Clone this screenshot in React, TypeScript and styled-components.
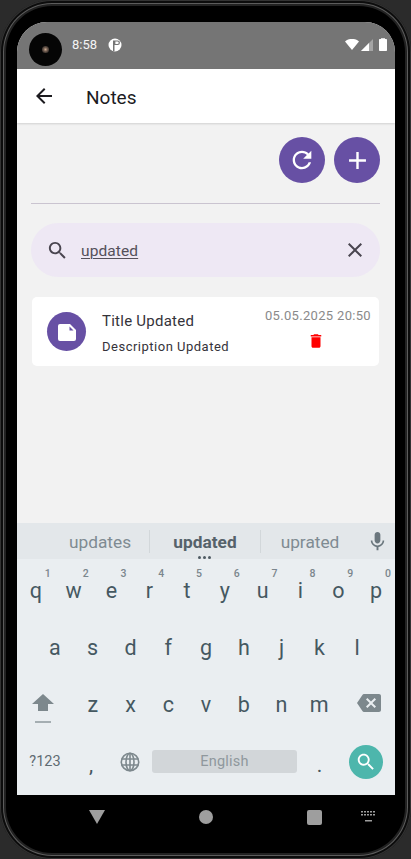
import React from "react";
import styled, { createGlobalStyle } from "styled-components";

const Global = createGlobalStyle`
  html, body { margin: 0; padding: 0; background: #2b2b2b; }
  body { width: 411px; height: 859px; overflow: hidden; font-family: Roboto, "Liberation Sans", sans-serif; }
  * { box-sizing: border-box; }
`;

const Device = styled.div`
  position: relative;
  width: 411px;
  height: 859px;
  background: #000;
  border-radius: 52px;
  padding: 22px 16px 0 17px;
  display: flex;
  flex-direction: column;
  box-shadow: inset 0 0 0 1px #333, inset 0 0 0 3px #0c0c0c, inset 0 0 0 4px #5c5c5c, inset 0 0 0 6px #222;
`;
const Screen = styled.div`
  width: 378px;
  height: 773px;
  display: flex;
  flex-direction: column;
  border-radius: 30px 30px 0 0;
  overflow: hidden;
  background: #f2f2f2;
`;
const StatusBar = styled.div`
  height: 47px;
  background: #757575;
  display: flex;
  align-items: center;
  padding: 0 8px 2px 55px;
  color: #fff;
  gap: 11px;
`;
const Time = styled.span`
  font-size: 13px;
  font-weight: 400;
  color: #f4f4f4;
`;
const StatusRight = styled.div`
  margin-left: auto;
  display: flex;
  align-items: center;
  gap: 2px;
`;
const Camera = styled.div`
  position: absolute;
  left: 29px;
  top: 33px;
  width: 33px;
  height: 33px;
  border-radius: 50%;
  background: #050505;
  display: flex;
  align-items: center;
  justify-content: center;
`;
const Lens = styled.div`
  width: 7px;
  height: 7px;
  border-radius: 50%;
  background: radial-gradient(circle, #c8a890 0, #5a4a40 50%, #222 100%);
`;
const AppBar = styled.div`
  height: 54px;
  background: #fff;
  display: flex;
  align-items: center;
  padding: 0 0 0 15px;
  box-shadow: 0 1px 2px rgba(0,0,0,.14);
  position: relative;
  gap: 30px;
`;
const Title = styled.h1`
  margin: 2px 0 0;
  font-size: 19px;
  font-weight: 400;
  color: #1c1b1f;
`;
const Body = styled.div`
  flex: 1;
  display: flex;
  flex-direction: column;
  padding: 14px 15px 0 14px;
`;
const Actions = styled.div`
  display: flex;
  justify-content: flex-end;
  gap: 9px;
`;
const RoundButton = styled.button`
  width: 46px;
  height: 46px;
  border: 0;
  padding: 0;
  border-radius: 50%;
  background: #6750a4;
  display: flex;
  align-items: center;
  justify-content: center;
`;
const Divider = styled.div`
  height: 1px;
  background: #cac4d0;
  margin-top: 20px;
`;
const SearchBar = styled.div`
  margin-top: 19px;
  height: 54px;
  border-radius: 27px;
  background: #eee8f4;
  display: flex;
  align-items: center;
  padding: 0 13px 0 15px;
`;
const SearchText = styled.span`
  margin-left: 12px;
  padding-top: 1px;
  flex: 1;
  font-size: 15.5px;
  letter-spacing: .1px;
  color: #55515b;
  text-decoration: underline;
  text-underline-offset: 2px;
  text-decoration-thickness: 1px;
`;
const Card = styled.div`
  margin: 20px 1px 0;
  height: 69px;
  background: #fff;
  border-radius: 5px;
  display: flex;
  align-items: center;
  padding: 0 8px 0 15px;
`;
const Avatar = styled.div`
  width: 39px;
  height: 39px;
  border-radius: 50%;
  background: #6750a4;
  display: flex;
  align-items: center;
  justify-content: center;
`;
const CardMain = styled.div`
  flex: 1;
  margin-left: 16px;
  display: flex;
  flex-direction: column;
  gap: 9px;
  padding-top: 3px;
`;
const CardTitle = styled.div`
  font-size: 15px;
  letter-spacing: .25px;
  color: #35333a;
`;
const CardDesc = styled.div`
  font-size: 13px;
  letter-spacing: .5px;
  color: #35333a;
`;
const CardSide = styled.div`
  display: flex;
  flex-direction: column;
  align-items: center;
  gap: 9px;
  padding-bottom: 5px;
`;
const TrashWrap = styled.div`
  display: flex;
  padding-right: 4px;
`;
const DateText = styled.div`
  font-size: 13px;
  letter-spacing: .32px;
  color: #8a8a8a;
`;
const Keyboard = styled.div`
  height: 272px;
  background: #eaeef1;
  display: flex;
  flex-direction: column;
`;
const Strip = styled.div`
  height: 36px;
  background: #e3e7ea;
  display: grid;
  grid-template-columns: 133px 111px 98px 1fr;
  align-items: center;
  position: relative;
`;
const Suggestion = styled.div<{ $bold?: boolean; $line?: boolean; $lead?: number }>`
  text-align: center;
  font-size: 17.3px;
  font-weight: ${(p) => (p.$bold ? 700 : 400)};
  color: ${(p) => (p.$bold ? "#56626a" : "#7f8b92")};
  height: 23px;
  line-height: 25px;
  border-right: ${(p) => (p.$line ? "1px solid #d2d7da" : "0")};
  padding-left: ${(p) => p.$lead ?? 0}px;
`;
const Dots = styled.div`
  position: absolute;
  left: 181px;
  bottom: 0;
  display: flex;
  gap: 2px;
`;
const Dot = styled.i`
  width: 3px;
  height: 3px;
  border-radius: 50%;
  background: #4f5b63;
`;
const MicCell = styled.div`
  display: flex;
  justify-content: center;
`;
const Keys = styled.div`
  flex: 1;
  display: flex;
  flex-direction: column;
  padding: 3px 0 5px;
`;
const KeyRow = styled.div<{ $inset?: number }>`
  height: 57px;
  display: flex;
  align-items: center;
  padding: 0 ${(p) => p.$inset ?? 0}px;
`;
const Key = styled.div`
  flex: 1;
  height: 100%;
  position: relative;
  display: flex;
  align-items: center;
  justify-content: center;
  font-size: 21.5px;
  color: #455861;
`;
const Hint = styled.span`
  position: absolute;
  top: 5px;
  right: 4px;
  font-size: 10.5px;
  font-weight: 500;
  color: #7b868d;
`;
const FuncKey = styled.div<{ $w: number }>`
  width: ${(p) => p.$w}px;
  height: 100%;
  display: flex;
  flex-direction: column;
  align-items: center;
  justify-content: center;
  color: #5f6b72;
  font-size: 14.5px;
`;
const ShiftKey = styled(FuncKey)`
  padding: 8px 5px 0 0;
`;
const BackspaceKey = styled(FuncKey)`
  padding: 0 0 3px 4px;
`;
const ShiftLine = styled.div`
  width: 16px;
  height: 2px;
  background: #a5aeb2;
  margin-top: 10px;
`;
const Punct = styled.div<{ $w: number }>`
  width: ${(p) => p.$w}px;
  text-align: center;
  font-size: 21px;
  color: #455861;
  padding-top: 6px;
`;
const Space = styled.div`
  width: 145px;
  height: 23px;
  border-radius: 3px;
  background: #d2d6d9;
  color: #8f989d;
  font-size: 14.5px;
  letter-spacing: .2px;
  text-align: center;
  line-height: 23px;
  margin-left: 1px;
`;
const SearchKey = styled.div`
  width: 34px;
  height: 34px;
  border-radius: 50%;
  background: #4db6ac;
  display: flex;
  align-items: center;
  justify-content: center;
  margin-left: 7px;
`;
const NavBar = styled.div`
  flex: 1;
  display: grid;
  grid-template-columns: 110px 108px 54px 1fr;
  align-items: center;
  padding-left: 72px;
  padding-bottom: 20px;
`;
const NavTri = styled.div`
  width: 0;
  height: 0;
  border-left: 8px solid transparent;
  border-right: 8px solid transparent;
  border-top: 14px solid #9e9e9e;
`;
const NavCircle = styled.div`
  width: 14px;
  height: 14px;
  border-radius: 50%;
  background: #9e9e9e;
`;
const NavSquare = styled.div`
  width: 15px;
  height: 15px;
  border-radius: 2px;
  background: #9e9e9e;
`;
const Icon = ({ d, size = 24, fill = "#fff" }: { d: string; size?: number; fill?: string }) => (
  <svg width={size} height={size} viewBox="0 0 24 24" fill={fill}><path d={d} /></svg>
);

const P = {
  back: "M20 11H7.83l5.59-5.59L12 4l-8 8 8 8 1.41-1.41L7.83 13H20v-2z",
  refresh: "M17.65 6.35C16.2 4.9 14.21 4 12 4c-4.42 0-7.99 3.58-7.99 8s3.57 8 7.99 8c3.73 0 6.84-2.55 7.73-6h-2.08c-.82 2.33-3.04 4-5.65 4-3.31 0-6-2.69-6-6s2.69-6 6-6c1.66 0 3.14.69 4.22 1.78L13 11h7V4l-2.35 2.35z",
  add: "M19 13h-6v6h-2v-6H5v-2h6V5h2v6h6v2z",
  search: "M15.5 14h-.79l-.28-.27C15.41 12.59 16 11.11 16 9.5 16 5.91 13.09 3 9.5 3S3 5.91 3 9.5 5.91 16 9.5 16c1.61 0 3.09-.59 4.23-1.57l.27.28v.79l5 4.99L20.49 19l-4.99-5zm-6 0C7.01 14 5 11.99 5 9.5S7.01 5 9.5 5 14 7.01 14 9.5 11.99 14 9.5 14z",
  close: "M19 6.41L17.59 5 12 10.59 6.41 5 5 6.41 10.59 12 5 17.59 6.41 19 12 13.41 17.59 19 19 17.59 13.41 12z",
  trash: "M6 19c0 1.1.9 2 2 2h8c1.1 0 2-.9 2-2V7H6v12zM19 4h-3.5l-1-1h-5l-1 1H5v2h14V4z",
  mic: "M12 14c1.66 0 2.99-1.34 2.99-3L15 5c0-1.66-1.34-3-3-3S9 3.34 9 5v6c0 1.66 1.34 3 3 3zm5.3-3c0 3-2.54 5.1-5.3 5.1S6.7 14 6.7 11H5c0 3.41 2.72 6.23 6 6.72V21h2v-3.28c3.28-.48 6-3.3 6-6.72h-1.7z",
  backspace: "M22 3H7c-.69 0-1.23.35-1.59.88L0 12l5.41 8.11c.36.53.9.89 1.59.89h15c1.1 0 2-.9 2-2V5c0-1.1-.9-2-2-2zm-3 12.59L17.59 17 14 13.41 10.41 17 9 15.59 12.59 12 9 8.41 10.41 7 14 10.59 17.59 7 19 8.41 15.41 12 19 15.59z",
};

const row1 = ["q", "w", "e", "r", "t", "y", "u", "i", "o", "p"];
const row2 = ["a", "s", "d", "f", "g", "h", "j", "k", "l"];
const row3 = ["z", "x", "c", "v", "b", "n", "m"];

export default function App() {
  return (
    <>
      <Global />
      <Device>
        <Camera><Lens /></Camera>
        <Screen>
          <StatusBar>
            <Time>8:58</Time>
            <svg width="14" height="14" viewBox="0 0 14 14">
              <circle cx="7" cy="7" r="6.5" fill="#fff" />
              <path d="M6.5 2.500h3.200a2 2 0 0 1 0 4.500H6.500V13H5V2.500z" fill="#757575" />
              <path d="M7.400 3.400h2a1 1 0 0 1 0 2.600h-2z" fill="#fff" />
            </svg>
            <StatusRight>
              <svg width="14" height="11" viewBox="0 0 14 11"><path d="M0 2.500C4-1 10-1 14 2.500L7 11z" fill="#fff" /></svg>
              <svg width="12" height="12" viewBox="0 0 12 12"><path d="M12 0v12H0z" fill="#fff" opacity=".35" /><path d="M8 4v8H0z" fill="#fff" /></svg>
              <svg width="8" height="13" viewBox="0 0 8 13" style={{ marginLeft: 4 }}><path d="M2 1V.2h4V1h1.200a.8.8 0 0 1 .8.8v10.400a.8.8 0 0 1-.8.8H.8a.8.8 0 0 1-.8-.8V1.800A.8.8 0 0 1 .8 1z" fill="#fff" /></svg>
            </StatusRight>
          </StatusBar>
          <AppBar>
            <Icon d={P.back} fill="#1c1b1f" />
            <Title>Notes</Title>
          </AppBar>
          <Body>
            <Actions>
              <RoundButton><Icon d={P.refresh} size={28} /></RoundButton>
              <RoundButton><Icon d={P.add} size={29} /></RoundButton>
            </Actions>
            <Divider />
            <SearchBar>
              <Icon d={P.search} size={23} fill="#49454f" />
              <SearchText>updated</SearchText>
              <Icon d={P.close} fill="#49454f" />
            </SearchBar>
            <Card>
              <Avatar>
                <svg width="20" height="20" viewBox="0 0 20 20">
                  <path d="M3 2h10l6 6v9a2 2 0 0 1-2 2H3a2 2 0 0 1-2-2V4a2 2 0 0 1 2-2z" fill="#fff" />
                  <path d="M12.500 4.500l4 4h-4z" fill="#6750a4" />
                </svg>
              </Avatar>
              <CardMain>
                <CardTitle>Title Updated</CardTitle>
                <CardDesc>Description Updated</CardDesc>
              </CardMain>
              <CardSide>
                <DateText>05.05.2025 20:50</DateText>
                <TrashWrap><Icon d={P.trash} size={18} fill="#ff0000" /></TrashWrap>
              </CardSide>
            </Card>
          </Body>
          <Keyboard>
            <Strip>
              <Suggestion $line $lead={34}>updates</Suggestion>
              <Suggestion $bold $line>updated</Suggestion>
              <Suggestion>uprated</Suggestion>
              <MicCell><Icon d={P.mic} size={23} fill="#6a767d" /></MicCell>
              <Dots><Dot /><Dot /><Dot /></Dots>
            </Strip>
            <Keys>
              <KeyRow>
                {row1.map((k, i) => (
                  <Key key={k}>{k}<Hint>{(i + 1) % 10}</Hint></Key>
                ))}
              </KeyRow>
              <KeyRow $inset={19}>
                {row2.map((k) => <Key key={k}>{k}</Key>)}
              </KeyRow>
              <KeyRow>
                <ShiftKey $w={57}>
                  <svg width="22" height="17" viewBox="0 0 22 17"><path d="M11 0l11 10h-6v7H6v-7H0z" fill="#7d888d" /></svg>
                  <ShiftLine />
                </ShiftKey>
                {row3.map((k) => <Key key={k}>{k}</Key>)}
                <BackspaceKey $w={57}><Icon d={P.backspace} size={24} fill="#7d888d" /></BackspaceKey>
              </KeyRow>
              <KeyRow>
                <FuncKey $w={56}>?123</FuncKey>
                <Punct $w={36}>,</Punct>
                <FuncKey $w={42}>
                  <svg width="20" height="20" viewBox="0 0 20 20" fill="none" stroke="#7d888d" strokeWidth="1.6">
                    <circle cx="10" cy="10" r="8.700" />
                    <ellipse cx="10" cy="10" rx="4" ry="8.700" />
                    <path d="M1.500 7h17M1.500 13h17M10 1v18" />
                  </svg>
                </FuncKey>
                <Space>English</Space>
                <Punct $w={45}>.</Punct>
                <SearchKey><Icon d={P.search} size={22} /></SearchKey>
              </KeyRow>
            </Keys>
          </Keyboard>
        </Screen>
        <NavBar>
          <NavTri />
          <NavCircle />
          <NavSquare />
          <svg width="16" height="12" viewBox="0 0 16 12" fill="#9e9e9e">
            <path d="M0 0h2v1.500H0zM3 0h2v1.500H3zM6 0h2v1.500H6zM9 0h2v1.500H9zM12 0h2v1.500h-2zM0 3h2v1.500H0zM3 3h2v1.500H3zM6 3h2v1.500H6zM9 3h2v1.500H9zM12 3h2v1.500h-2zM4 9h7v1.500H4z" />
          </svg>
        </NavBar>
      </Device>
    </>
  );
}
